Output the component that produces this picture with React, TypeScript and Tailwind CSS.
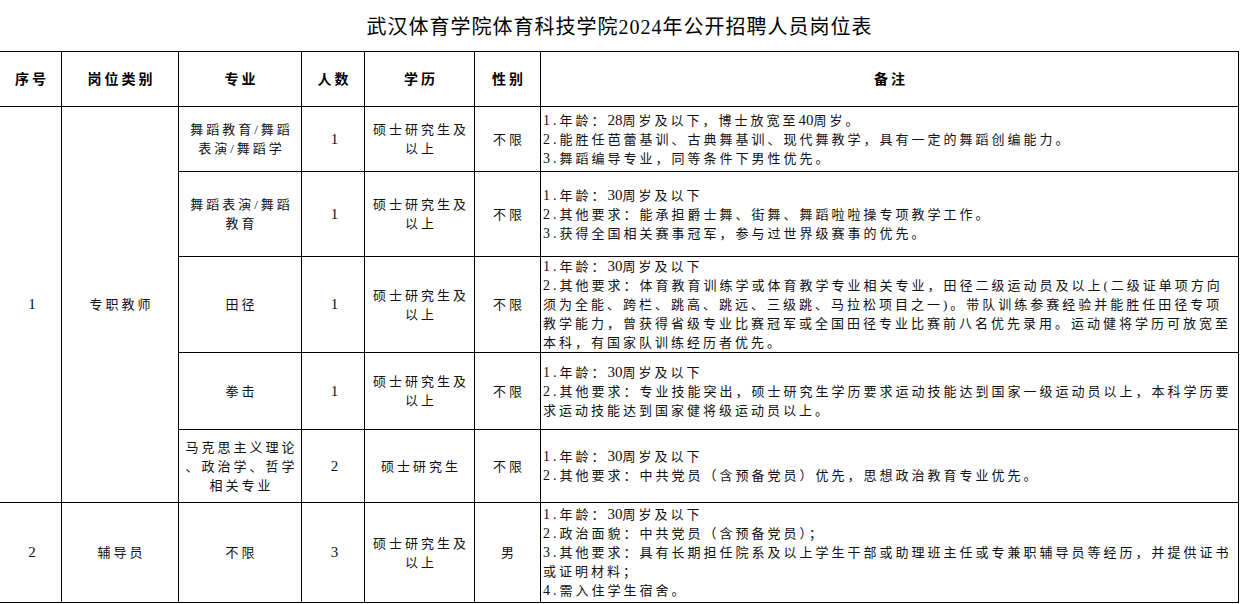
import React from "react";

const FONT = {
  fontFamily: '"Liberation Serif", "Noto Sans CJK SC", serif',
};

type Row = {
  major: string[];
  count: string;
  edu: string[];
  gender: string;
  notes: string[];
};

const rowsA: Row[] = [
  {
    major: ["舞蹈教育/舞蹈", "表演/舞蹈学"],
    count: "1",
    edu: ["硕士研究生及", "以上"],
    gender: "不限",
    notes: [
      "1.年龄：28周岁及以下，博士放宽至40周岁。",
      "2.能胜任芭蕾基训、古典舞基训、现代舞教学，具有一定的舞蹈创编能力。",
      "3.舞蹈编导专业，同等条件下男性优先。",
    ],
  },
  {
    major: ["舞蹈表演/舞蹈", "教育"],
    count: "1",
    edu: ["硕士研究生及", "以上"],
    gender: "不限",
    notes: [
      "1.年龄：30周岁及以下",
      "2.其他要求：能承担爵士舞、街舞、舞蹈啦啦操专项教学工作。",
      "3.获得全国相关赛事冠军，参与过世界级赛事的优先。",
    ],
  },
  {
    major: ["田径"],
    count: "1",
    edu: ["硕士研究生及", "以上"],
    gender: "不限",
    notes: [
      "1.年龄：30周岁及以下",
      "2.其他要求：体育教育训练学或体育教学专业相关专业，田径二级运动员及以上(二级证单项方向",
      "须为全能、跨栏、跳高、跳远、三级跳、马拉松项目之一)。带队训练参赛经验并能胜任田径专项",
      "教学能力，曾获得省级专业比赛冠军或全国田径专业比赛前八名优先录用。运动健将学历可放宽至",
      "本科，有国家队训练经历者优先。",
    ],
  },
  {
    major: ["拳击"],
    count: "1",
    edu: ["硕士研究生及", "以上"],
    gender: "不限",
    notes: [
      "1.年龄：30周岁及以下",
      "2.其他要求：专业技能突出，硕士研究生学历要求运动技能达到国家一级运动员以上，本科学历要",
      "求运动技能达到国家健将级运动员以上。",
    ],
  },
  {
    major: ["马克思主义理论", "、政治学、哲学", "相关专业"],
    count: "2",
    edu: ["硕士研究生"],
    gender: "不限",
    notes: [
      "1.年龄：30周岁及以下",
      "2.其他要求：中共党员（含预备党员）优先，思想政治教育专业优先。",
    ],
  },
];

const rowB: Row = {
  major: ["不限"],
  count: "3",
  edu: ["硕士研究生及", "以上"],
  gender: "男",
  notes: [
    "1.年龄：30周岁及以下",
    "2.政治面貌：中共党员（含预备党员）；",
    "3.其他要求：具有长期担任院系及以上学生干部或助理班主任或专兼职辅导员等经历，并提供证书",
    "或证明材料；",
    "4.需入住学生宿舍。",
  ],
};

function Txt({ s }: { s: string }) {
  const parts = s.split(/(\d+\.|\d+)/);
  return (
    <>
      {parts.map((p, i) => {
        if (i % 2 === 0) return <React.Fragment key={i}>{p}</React.Fragment>;
        if (p.endsWith("."))
          return (
            <span key={i} className="text-[14px] leading-[19px]">
              {p}
            </span>
          );
        return (
          <span key={i} className="text-[15px] tracking-normal leading-[19px]">
            {p}
          </span>
        );
      })}
    </>
  );
}

function Center({
  lines,
  className = "",
}: {
  lines: string[];
  className?: string;
}) {
  return (
    <div
      className={
        "bg-white flex flex-col items-center justify-center text-center text-[13px] leading-[19px] tracking-[3px] pl-[3px] text-[#111] " +
        className
      }
    >
      {lines.map((l, i) => (
        <div key={i} className="whitespace-nowrap">
          <Txt s={l} />
        </div>
      ))}
    </div>
  );
}

function Notes({ lines }: { lines: string[] }) {
  return (
    <div className="bg-white flex flex-col justify-center pl-[2px] text-[13px] leading-[19px] tracking-[3px] text-[#111]">
      {lines.map((l, i) => (
        <div key={i} className="whitespace-nowrap">
          <Txt s={l} />
        </div>
      ))}
    </div>
  );
}

function Head({ text }: { text: string }) {
  return (
    <div className="bg-white flex items-center justify-center pl-[3px] text-[14px] font-bold tracking-[3px] text-black">
      {text}
    </div>
  );
}

function DataRow({ r }: { r: Row }) {
  return (
    <>
      <Center lines={r.major} />
      <Center lines={[r.count]} />
      <Center lines={r.edu} />
      <Center lines={[r.gender]} />
      <Notes lines={r.notes} />
    </>
  );
}

export default function App() {
  return (
    <div className="w-[1244px] h-[604px] bg-white overflow-hidden" style={FONT}>
      <div className="w-[1239px] h-[51px] flex items-center justify-center pt-[3px] text-[20px] tracking-[1px] text-black">
        武汉体育学院体育科技学院2024年公开招聘人员岗位表
      </div>
      <div className="w-[1239px] grid grid-cols-[61px_116px_122px_62px_109px_65px_697px] grid-rows-[54px_64px_84px_95px_76px_72px_99px] gap-px bg-black pt-px pb-px pr-px">
        <Head text="序号" />
        <Head text="岗位类别" />
        <Head text="专业" />
        <Head text="人数" />
        <Head text="学历" />
        <Head text="性别" />
        <Head text="备注" />

        <Center lines={["1"]} className="row-span-5" />
        <Center lines={["专职教师"]} className="row-span-5" />
        {rowsA.map((r, i) => (
          <DataRow key={i} r={r} />
        ))}

        <Center lines={["2"]} />
        <Center lines={["辅导员"]} />
        <DataRow r={rowB} />
      </div>
    </div>
  );
}
